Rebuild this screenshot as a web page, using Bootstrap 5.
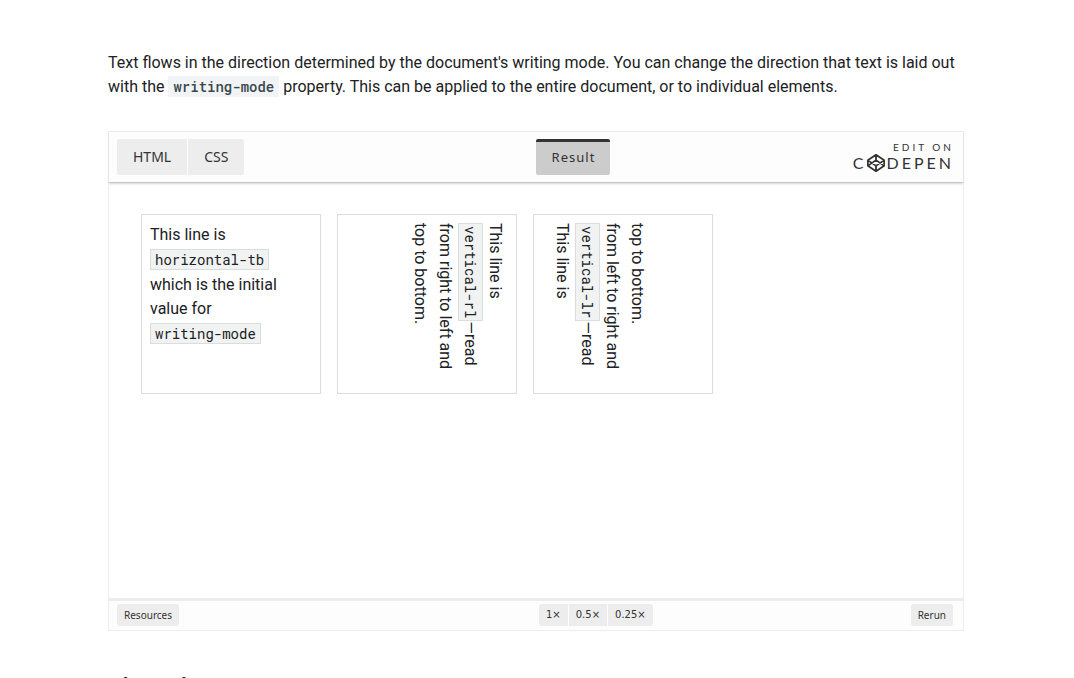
<!DOCTYPE html>
<html lang="en">
<head>
<meta charset="utf-8">
<meta name="viewport" content="width=device-width, initial-scale=1">
<title>Writing mode</title>
<link href="https://cdn.jsdelivr.net/npm/bootstrap@5.3.0/dist/css/bootstrap.min.css" rel="stylesheet">
<script src="https://cdn.jsdelivr.net/npm/bootstrap@5.3.0/dist/js/bootstrap.bundle.min.js" defer></script>
<style>
html { scrollbar-width: none; }
body { font-family: Roboto, "Liberation Sans", sans-serif; font-size: 16px; line-height: 24px; color: #202124; background: #fff; }
.article { margin: 0 110px 0 108px; padding-top: 51px; }
.intro { margin-bottom: 32px; }
code { font-family: "Roboto Mono", "DejaVu Sans Mono", monospace; font-size: 14px; white-space: nowrap; }
.intro code { font-weight: 500; color: #37474f; background: #f1f3f4; padding: 1px 5px; }
.pen { border: 1px solid #ececec; }
.pen-head { background: #fdfdfd; height: 51px; padding: 7px 10px 7px 8px; border-bottom: 1px solid #c6c8c6; box-shadow: 0 1px 2px #d5d5d5; }
.pen .btn { font-family: "Noto Sans", "Open Sans", sans-serif; color: #333; background: #ededed; border: 0; }
.pen-head .btn { font-size: 14px; line-height: 20px; padding: 8px 16px; height: 36px; border-radius: 2px; }
.pen-head .btn.active { font-size: 13px; background: #ccc; border-top: 3px solid #333; padding: 5px 15px 8px 16px; letter-spacing: 1px; }
.pen-foot { background: #fdfdfd; height: 32px; padding: 3px 10px 4px 8px; border-top: 3px solid #ececec; }
.pen-foot .btn { font-size: 10px; line-height: 14px; padding: 4px 7px; border-radius: 3px; }
.pen-foot .zoom-set .btn { font-family: "DejaVu Sans", sans-serif; }
.btn-set { gap: 1px; }
.btn-set .btn:not(:last-child) { border-top-right-radius: 0; border-bottom-right-radius: 0; }
.btn-set .btn:not(:first-child) { border-top-left-radius: 0; border-bottom-left-radius: 0; }
.head-start { flex: 419 1 0; }
.head-end { flex: 343 1 0; }
.foot-start { flex: 423 1 0; }
.foot-end { flex: 301 1 0; }
.stage { height: 415px; padding: 31px 32px; gap: 16px; }
.sample { width: 180px; height: 180px; padding: 8px; border: 1px solid #dadce0; }
.sample code { display: inline-block; line-height: 19px; color: #202124; background: #f1f3f3; border: 1px solid #dadce0; padding: 0 4px; margin: 2px 0 3px; }
.v-rl { writing-mode: vertical-rl; line-height: 25px; }
.v-lr { writing-mode: vertical-lr; line-height: 25px; padding-left: 16px; }
.v-rl code, .v-lr code { padding: 2px; margin: 0; }
.brand { color: #333; font-family: Lato, sans-serif; text-decoration: none; padding: 1px 2px 0 0; }
.brand-top { font-size: 10px; line-height: 14px; letter-spacing: 3px; margin-right: -3px; }
.brand-name { font-size: 16px; line-height: 18px; letter-spacing: 3px; margin-right: -3px; }
.brand-name svg { margin-right: 2px; }
.next-title { font-size: 24px; line-height: 32px; font-weight: 500; margin: 40px 0 24px; }
</style>
</head>
<body>
<main class="article">
  <p class="intro">Text flows in the direction determined by the document's writing mode. You can change the direction that text is laid out with the <code>writing-mode</code> property. This can be applied to the entire document, or to individual elements.</p>
  <section class="pen">
    <header class="pen-head d-flex">
      <div class="head-start d-flex btn-set"><button type="button" class="btn">HTML</button><button type="button" class="btn">CSS</button></div>
      <button type="button" class="btn active">Result</button>
      <div class="head-end d-flex justify-content-end">
        <a href="#" class="brand d-flex flex-column align-items-end">
          <span class="brand-top">EDIT ON</span>
          <span class="brand-name d-flex align-items-center"><span>C</span><svg width="18" height="18" viewBox="1 1 22 22" fill="none" stroke="#333" stroke-width="2.2" stroke-linejoin="round" aria-label="O"><path d="M12 2 22 8.500v7L12 22 2 15.500v-7zM12 22v-6.500M22 8.500l-10 7-10-7M2 15.500l10-7 10 7M12 2v6.500"/></svg><span>DEPEN</span></span>
        </a>
      </div>
    </header>
    <div class="stage d-flex">
      <div class="sample">This line is <code>horizontal-tb</code> which is the initial value for <code>writing-mode</code></div>
      <div class="sample v-rl">This line is <code>vertical-rl</code>—read from right to left and top to bottom.</div>
      <div class="sample v-lr">This line is <code>vertical-lr</code>—read from left to right and top to bottom.</div>
    </div>
    <footer class="pen-foot d-flex">
      <div class="foot-start d-flex"><button type="button" class="btn">Resources</button></div>
      <div class="d-flex btn-set zoom-set"><button type="button" class="btn">1×</button><button type="button" class="btn">0.5×</button><button type="button" class="btn">0.25×</button></div>
      <div class="foot-end d-flex justify-content-end"><button type="button" class="btn">Rerun</button></div>
    </footer>
  </section>
  <h2 class="next-title">The solution</h2>
</main>
</body>
</html>
